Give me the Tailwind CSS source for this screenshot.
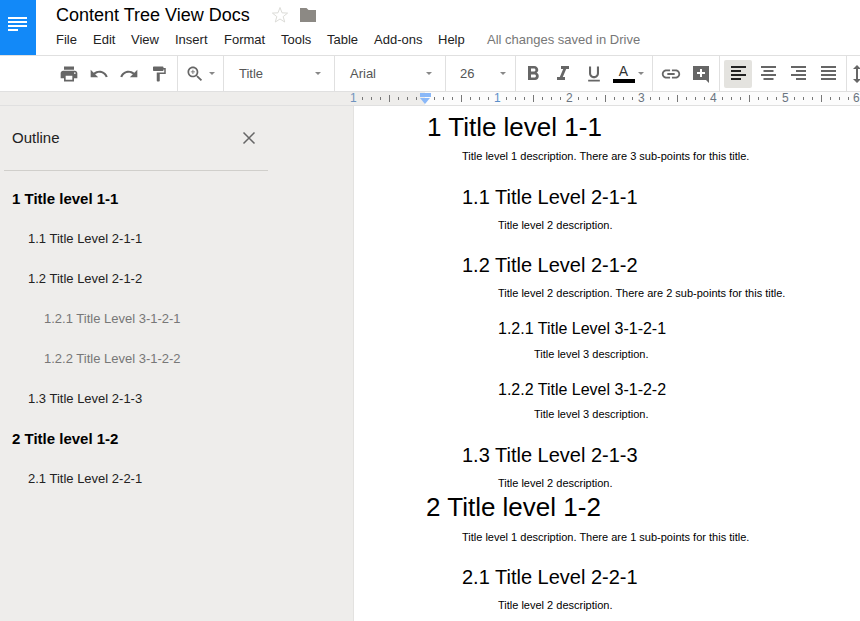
<!DOCTYPE html>
<html lang="en">
<head>
  <meta charset="UTF-8" />
  <title>Content Tree View Docs</title>
  <script src="https://cdn.jsdelivr.net/npm/@tailwindcss/browser@4"></script>
</head>
<body class="h-[621px] w-[860px] overflow-hidden bg-white font-['Liberation_Sans',sans-serif] text-black">

  <!-- title bar -->
  <header class="flex h-[56px] border-b border-[#e0e0e0]">
    <div class="flex h-[55px] w-[36px] flex-col items-center justify-center gap-[2px] bg-[#1289f8] pb-[7px] pr-[2px]">
      <span class="h-[2px] w-[19px] bg-white"></span>
      <span class="h-[2px] w-[19px] bg-white"></span>
      <span class="h-[2px] w-[19px] bg-white"></span>
      <span class="mr-[9px] h-[2px] w-[10px] bg-white"></span>
    </div>
    <div class="ml-[20px] flex flex-col">
      <div class="mt-[4px] flex h-[22px] items-center">
        <span class="text-[18px] leading-[22px]">Content Tree View Docs</span>
        <svg class="ml-[21px]" width="18" height="18" viewBox="0 0 18 18"><path d="M9 1.500l2 5.300 5.600.3-4.400 3.500 1.500 5.400L9 13l-4.700 3 1.500-5.400-4.400-3.500 5.600-.3z" fill="none" stroke="#dcdcd8" stroke-width="1"/></svg>
        <svg class="ml-[10px]" width="18" height="16" viewBox="0 0 18 16"><path d="M1 1h6.500l2 2H17v12H1z" fill="#8c8984"/></svg>
      </div>
      <nav class="mt-[5px] flex h-[18px] items-center text-[13px] leading-[18px] text-[#222]">
        <span class="w-[37px]">File</span>
        <span class="w-[38px]">Edit</span>
        <span class="w-[44px]">View</span>
        <span class="w-[49px]">Insert</span>
        <span class="w-[57px]">Format</span>
        <span class="w-[46px]">Tools</span>
        <span class="w-[47px]">Table</span>
        <span class="w-[64px]">Add-ons</span>
        <span class="w-[49px]">Help</span>
        <span class="text-[#777]">All changes saved in Drive</span>
      </nav>
    </div>
  </header>

  <!-- toolbar -->
  <div class="flex h-[36px] overflow-hidden border-b border-[#e0e0e0] text-[13px] text-[#555]">
    <div class="flex w-[178px] shrink-0 items-center border-r border-[#e0e0e0] pl-[54px]">
      <span class="flex w-[30px] justify-center"><svg width="20" height="20" viewBox="0 0 24 24" fill="#666"><path d="M19 8H5c-1.660 0-3 1.340-3 3v6h4v4h12v-4h4v-6c0-1.660-1.340-3-3-3zm-3 11H8v-5h8v5zm3-7c-.55 0-1-.45-1-1s.45-1 1-1 1 .45 1 1-.45 1-1 1zm-1-9H6v4h12V3z"/></svg></span>
      <span class="flex w-[30px] justify-center"><svg width="20" height="20" viewBox="0 0 24 24" fill="#666"><path d="M12.500 8c-2.650 0-5.050.99-6.900 2.600L2 7v9h9l-3.620-3.620c1.390-1.160 3.160-1.880 5.120-1.880 3.540 0 6.550 2.310 7.600 5.500l2.370-.78C21.080 11.030 17.150 8 12.500 8z"/></svg></span>
      <span class="flex w-[30px] justify-center"><svg width="20" height="20" viewBox="0 0 24 24" fill="#666"><path d="M18.400 10.600C16.550 8.990 14.150 8 11.500 8c-4.650 0-8.580 3.030-9.960 7.220L3.900 16c1.050-3.190 4.050-5.500 7.600-5.500 1.950 0 3.730.72 5.120 1.880L13 16h9V7l-3.600 3.600z"/></svg></span>
      <span class="flex w-[30px] justify-center"><svg width="18" height="18" viewBox="0 0 24 24" fill="#666"><path d="M18 4V3c0-.55-.45-1-1-1H5c-.55 0-1 .45-1 1v4c0 .55.45 1 1 1h12c.55 0 1-.45 1-1V6h1v4H9v11c0 .55.45 1 1 1h2c.55 0 1-.45 1-1v-9h8V4h-3z"/></svg></span>
    </div>
    <div class="flex w-[46px] shrink-0 items-center border-r border-[#e0e0e0] pl-[7px]">
      <svg width="20" height="20" viewBox="0 0 24 24" fill="#666"><path d="M15.500 14h-.79l-.28-.27C15.410 12.590 16 11.110 16 9.500 16 5.910 13.090 3 9.500 3S3 5.910 3 9.500 5.910 16 9.500 16c1.610 0 3.090-.59 4.230-1.570l.27.28v.79l5 4.990L20.490 19l-4.990-5zm-6 0C7.010 14 5 11.990 5 9.500S7.010 5 9.500 5 14 7.010 14 9.500 11.990 14 9.500 14z"/><path d="M10 7H9v2H7v1h2v2h1v-2h2V9h-2z"/></svg>
      <span class="ml-[4px] h-0 w-0 border-x-[3px] border-t-[3px] border-x-transparent border-t-[#888]"></span>
    </div>
    <div class="flex w-[111px] shrink-0 items-center justify-between border-r border-[#e0e0e0] pl-[15px] pr-[13px]">
      <span>Title</span>
      <span class="h-0 w-0 border-x-[3px] border-t-[3px] border-x-transparent border-t-[#888]"></span>
    </div>
    <div class="flex w-[111px] shrink-0 items-center justify-between border-r border-[#e0e0e0] pl-[15px] pr-[13px]">
      <span>Arial</span>
      <span class="h-0 w-0 border-x-[3px] border-t-[3px] border-x-transparent border-t-[#888]"></span>
    </div>
    <div class="flex w-[70px] shrink-0 items-center justify-between border-r border-[#e0e0e0] pl-[14px] pr-[9px]">
      <span>26</span>
      <span class="h-0 w-0 border-x-[3px] border-t-[3px] border-x-transparent border-t-[#888]"></span>
    </div>
    <div class="flex w-[137px] shrink-0 items-center border-r border-[#e0e0e0] pl-[3px]">
      <span class="flex w-[28px] justify-center"><svg width="24" height="24" viewBox="0 0 24 24" fill="#666"><path d="M15.600 10.790c.97-.67 1.650-1.770 1.650-2.790 0-2.260-1.750-4-4-4H7v14h7.040c2.090 0 3.710-1.700 3.710-3.790 0-1.520-.86-2.820-2.150-3.420zM10 6.500h3c.83 0 1.500.67 1.500 1.500s-.67 1.500-1.500 1.500h-3v-3zm3.500 9H10v-3h3.500c.83 0 1.500.67 1.500 1.500s-.67 1.500-1.500 1.500z"/></svg></span>
      <span class="flex w-[32px] justify-center"><svg width="24" height="24" viewBox="0 0 24 24" fill="#666"><path d="M10 4v3h2.210l-3.420 8H6v3h8v-3h-2.210l3.420-8H18V4z"/></svg></span>
      <span class="flex w-[30px] justify-center"><svg width="20" height="20" viewBox="0 0 24 24" fill="#666"><path d="M12 17c3.310 0 6-2.690 6-6V3h-2.500v8c0 1.930-1.570 3.500-3.500 3.500S8.500 12.930 8.500 11V3H6v8c0 3.310 2.690 6 6 6zm-7 2v2h14v-2H5z"/></svg></span>
      <span class="flex w-[29px] flex-col items-center">
        <span class="text-[14px] leading-[14px] text-[#333]">A</span>
        <span class="mt-[1px] h-[4px] w-[22px] bg-black"></span>
      </span>
      <span class="h-0 w-0 border-x-[3px] border-t-[3px] border-x-transparent border-t-[#888]"></span>
    </div>
    <div class="flex w-[67px] shrink-0 items-center border-r border-[#e0e0e0] pl-[3px]">
      <span class="flex w-[30px] justify-center"><svg width="22" height="22" viewBox="0 0 24 24" fill="#666"><path d="M3.900 12c0-1.710 1.390-3.100 3.100-3.100h4V7H7c-2.760 0-5 2.240-5 5s2.240 5 5 5h4v-1.900H7c-1.710 0-3.100-1.390-3.100-3.100zM8 13h8v-2H8v2zm9-6h-4v1.900h4c1.710 0 3.100 1.390 3.100 3.100s-1.390 3.100-3.100 3.100h-4V17h4c2.760 0 5-2.240 5-5s-2.240-5-5-5z"/></svg></span>
      <span class="flex w-[30px] justify-center"><svg width="18" height="18" viewBox="0 0 18 18"><path fill-rule="evenodd" d="M1 1h16v17l-3-3H1zM8 4v3H5v2h3v3h2V9h3V7h-3V4z" fill="#666"/></svg></span>
    </div>
    <div class="flex w-[127px] shrink-0 items-center border-r border-[#e0e0e0] pl-[4px]">
      <span class="flex h-[28px] w-[28px] items-center justify-center rounded-[2px] bg-[#e4e3df]"><svg width="15" height="15" viewBox="0 0 15 15" fill="#222"><path d="M0 0h15v2H0zM0 4h10v2H0zM0 8h15v2H0zM0 12h10v2H0z"/></svg></span>
      <span class="ml-[1px] flex w-[30px] justify-center"><svg width="15" height="15" viewBox="0 0 15 15" fill="#666"><path d="M0 0h15v2H0zM2.500 4h10v2h-10zM0 8h15v2H0zM2.500 12h10v2h-10z"/></svg></span>
      <span class="flex w-[30px] justify-center"><svg width="15" height="15" viewBox="0 0 15 15" fill="#666"><path d="M0 0h15v2H0zM5 4h10v2H5zM0 8h15v2H0zM5 12h10v2H5z"/></svg></span>
      <span class="flex w-[30px] justify-center"><svg width="15" height="15" viewBox="0 0 15 15" fill="#666"><path d="M0 0h15v2H0zM0 4h15v2H0zM0 8h15v2H0zM0 12h15v2H0z"/></svg></span>
    </div>
    <div class="flex shrink-0 items-center pl-[5px]">
      <svg width="10" height="18" viewBox="0 0 10 18" fill="#666"><path d="M5 0l4 4H6v10h3l-4 4-4-4h3V4H1z"/></svg>
    </div>
  </div>

  <!-- ruler -->
  <div class="relative h-[14px] overflow-hidden border-b border-[#e0e0e0] bg-[#fcfcfc] text-[12px] leading-[13px] text-[#6a7480]">
    <div class="absolute inset-y-0 left-0 w-[425px] bg-[#eeedeb]"></div>
    <svg class="absolute left-[353px] top-0" width="507" height="13">
      <defs>
        <pattern id="ticks" width="72" height="13" patternUnits="userSpaceOnUse">
          <path d="M9.500 5v3M18.500 5v3M27.500 5v3M45.500 5v3M54.500 5v3M63.500 5v3M36.500 3v7" stroke="#777" stroke-width="1"/>
        </pattern>
      </defs>
      <rect width="507" height="13" fill="url(#ticks)"/>
    </svg>
    <span class="absolute left-[350px] top-0 text-[#6f93bd]">1</span>
    <span class="absolute left-[494px] top-0 text-[#5b8fc9]">1</span>
    <span class="absolute left-[566px] top-0">2</span>
    <span class="absolute left-[638px] top-0">3</span>
    <span class="absolute left-[710px] top-0">4</span>
    <span class="absolute left-[782px] top-0">5</span>
    <span class="absolute left-[853px] top-0">6</span>
    <span class="absolute left-[420px] top-px h-[4px] w-[11px] bg-[#8ab8f8]"></span>
    <span class="absolute left-[420px] top-[6px] h-0 w-0 border-x-[5.500px] border-t-[6px] border-x-transparent border-t-[#8ab8f8]"></span>
  </div>

  <div class="flex h-[515px]">
    <!-- outline sidebar -->
    <aside class="h-full w-[354px] shrink-0 border-r border-[#e3e2e0] bg-[#eeedeb]">
      <div class="ml-[4px] w-[264px] border-b border-[#d0cfcb]">
        <div class="flex h-[64px] items-center justify-between pl-[8px] pr-[12px] text-[15px] text-[#222]">
          <span>Outline</span>
          <svg width="14" height="14" viewBox="0 0 14 14" stroke="#666" stroke-width="1.500"><path d="M1.500 1.500l11 11M12.500 1.500l-11 11"/></svg>
        </div>
      </div>
      <ul class="mt-[8px] flex flex-col text-[13px] leading-[40px] text-[#222]">
        <li class="pl-[12px] text-[15px] font-bold text-black">1 Title level 1-1</li>
        <li class="pl-[28px]">1.1 Title Level 2-1-1</li>
        <li class="pl-[28px]">1.2 Title Level 2-1-2</li>
        <li class="pl-[44px] text-[#777]">1.2.1 Title Level 3-1-2-1</li>
        <li class="pl-[44px] text-[#777]">1.2.2 Title Level 3-1-2-2</li>
        <li class="pl-[28px]">1.3 Title Level 2-1-3</li>
        <li class="pl-[12px] text-[15px] font-bold text-black">2 Title level 1-2</li>
        <li class="pl-[28px]">2.1 Title Level 2-2-1</li>
      </ul>
    </aside>

    <!-- document -->
    <main class="min-w-0 flex-1 leading-[20px]">
      <h1 class="ml-[73px] mt-[11px] text-[26px]">1 Title level 1-1</h1>
      <p class="ml-[108px] mt-[9px] text-[11px]">Title level 1 description. There are 3 sub-points for this title.</p>
      <h2 class="ml-[108px] mt-[21px] text-[20px]">1.1 Title Level 2-1-1</h2>
      <p class="ml-[144px] mt-[8px] text-[11px]">Title level 2 description.</p>
      <h2 class="ml-[108px] mt-[20px] text-[20px]">1.2 Title Level 2-1-2</h2>
      <p class="ml-[144px] mt-[8px] text-[11px]">Title level 2 description. There are 2 sub-points for this title.</p>
      <h3 class="ml-[144px] mt-[16px] text-[16px]">1.2.1 Title Level 3-1-2-1</h3>
      <p class="ml-[180px] mt-[5px] text-[11px]">Title level 3 description.</p>
      <h3 class="ml-[144px] mt-[16px] text-[16px]">1.2.2 Title Level 3-1-2-2</h3>
      <p class="ml-[180px] mt-[4px] text-[11px]">Title level 3 description.</p>
      <h2 class="ml-[108px] mt-[21px] text-[20px]">1.3 Title Level 2-1-3</h2>
      <p class="ml-[144px] mt-[8px] text-[11px]">Title level 2 description.</p>
      <h1 class="ml-[72px] mt-[4px] text-[26px]">2 Title level 1-2</h1>
      <p class="ml-[108px] mt-[10px] text-[11px]">Title level 1 description. There are 1 sub-points for this title.</p>
      <h2 class="ml-[108px] mt-[20px] text-[20px]">2.1 Title Level 2-2-1</h2>
      <p class="ml-[144px] mt-[8px] text-[11px]">Title level 2 description.</p>
    </main>
  </div>
</body>
</html>
